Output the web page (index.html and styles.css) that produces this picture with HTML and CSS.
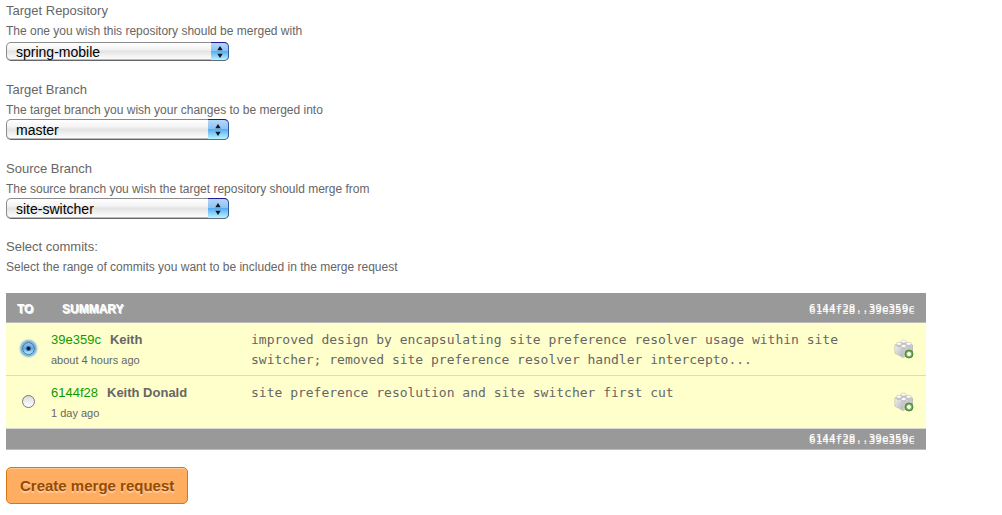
FILE: index.html
```html
<!DOCTYPE html>
<html lang="en">
<head>
<meta charset="utf-8">
<title>Create merge request</title>
<link rel="stylesheet" href="styles.css">
</head>
<body>
<svg class="defs" width="0" height="0" aria-hidden="true">
  <defs>
    <linearGradient id="side" x1="0" y1="0" x2="1" y2="1"><stop offset="0" stop-color="#f0f0f0"/><stop offset="1" stop-color="#b4b4b4"/></linearGradient>
    <radialGradient id="plus"><stop offset="0" stop-color="#ffffff"/><stop offset=".35" stop-color="#e4f3d8"/><stop offset=".6" stop-color="#83bd63"/><stop offset="1" stop-color="#4b8b31"/></radialGradient>
    <symbol id="brick" viewBox="0 0 20 20">
      <path d="M1 6 9.500 3l9 3v8L9 18.500 1 14z" fill="#e6e6e6" stroke="#b0b0b0" stroke-width=".8"/>
      <path d="M1.300 6.500 9 10V18L1.300 13.800z" fill="url(#side)"/>
      <path d="M9 10 18.200 6.500v7.400L9 18z" fill="#c8c8c8"/>
      <g fill="#c4c4c4">
        <path d="M7 2.500v2a2.600 1.500 0 0 0 5.200 0v-2z"/>
        <path d="M2.400 4.800v2a2.600 1.500 0 0 0 5.200 0v-2z"/>
        <path d="M12 4.800v2a2.600 1.500 0 0 0 5.200 0v-2z"/>
        <path d="M7 7v2a2.600 1.500 0 0 0 5.200 0V7z"/>
      </g>
      <g fill="#fff" stroke="#b0b0b0" stroke-width=".5">
        <ellipse cx="9.600" cy="2.500" rx="2.600" ry="1.500"/>
        <ellipse cx="5" cy="4.800" rx="2.600" ry="1.500"/>
        <ellipse cx="14.600" cy="4.800" rx="2.600" ry="1.500"/>
        <ellipse cx="9.600" cy="7" rx="2.600" ry="1.500"/>
      </g>
      <circle cx="15" cy="15" r="4" fill="url(#plus)" stroke="#4b8b31" stroke-width=".9"/>
      <path d="M15 13v4M13 15h4" stroke="#fff" stroke-width="1.600"/>
    </symbol>
    <symbol id="arrows" viewBox="0 0 10 14"><path d="M5 1 7.700 5.200H2.300zM5 13 2.300 8.800h5.400z" fill="#101820"/></symbol>
  </defs>
</svg>
<form class="merge-form">
  <div class="field">
    <label class="field-label" for="repo">Target Repository</label>
    <p class="hint">The one you wish this repository should be merged with</p>
    <div class="picker picker-small">
      <select id="repo"><option>spring-mobile</option></select>
      <span class="cap"><svg class="arrows"><use href="#arrows"/></svg></span>
    </div>
  </div>
  <div class="field">
    <label class="field-label" for="target">Target Branch</label>
    <p class="hint">The target branch you wish your changes to be merged into</p>
    <div class="picker">
      <select id="target"><option>master</option></select>
      <span class="cap"><svg class="arrows"><use href="#arrows"/></svg></span>
    </div>
  </div>
  <div class="field">
    <label class="field-label" for="source">Source Branch</label>
    <p class="hint">The source branch you wish the target repository should merge from</p>
    <div class="picker">
      <select id="source"><option>site-switcher</option></select>
      <span class="cap"><svg class="arrows"><use href="#arrows"/></svg></span>
    </div>
  </div>
  <div class="commits-intro">
    <div class="field-label" id="commits-label">Select commits:</div>
    <p class="hint">Select the range of commits you want to be included in the merge request</p>
  </div>
  <table class="commits" aria-labelledby="commits-label">
    <thead>
      <tr><th class="to">To</th><th class="summary" colspan="2">Summary</th><th class="range" colspan="2">6144f28..39e359c</th></tr>
    </thead>
    <tbody>
      <tr>
        <td class="to"><input type="radio" name="to" id="c1" aria-label="39e359c" checked></td>
        <td class="who"><a href="#c1">39e359c</a><label for="c1">Keith</label><div class="when">about 4 hours ago</div></td>
        <td class="message" colspan="2">improved design by encapsulating site preference resolver usage within site switcher; removed site preference resolver handler intercepto...</td>
        <td class="action"><svg class="brick"><use href="#brick"/></svg></td>
      </tr>
      <tr>
        <td class="to"><input type="radio" name="to" id="c2" aria-label="6144f28"></td>
        <td class="who"><a href="#c2">6144f28</a><label for="c2">Keith Donald</label><div class="when">1 day ago</div></td>
        <td class="message" colspan="2">site preference resolution and site switcher first cut</td>
        <td class="action"><svg class="brick"><use href="#brick"/></svg></td>
      </tr>
    </tbody>
    <tfoot>
      <tr><td class="range" colspan="5">6144f28..39e359c</td></tr>
    </tfoot>
  </table>
  <button class="submit" type="button">Create merge request</button>
</form>
</body>
</html>
```
FILE: styles.css
```css
* { box-sizing: border-box; }
body {
  margin: 0;
  background: #fff;
  color: #666;
  font: 13px/20px "Liberation Sans", Arial, sans-serif;
}
.defs { position: absolute; }
.merge-form { padding: 0 76px 0 6px; }
.field { margin-bottom: 18px; }
.field-label { display: block; padding-top: 1px; }
.hint { margin: 0; padding-top: 1px; font-size: 12px; line-height: 18px; }

.picker { position: relative; width: 223px; height: 21px; }
.picker select {
  appearance: none;
  display: block;
  width: 100%;
  height: 100%;
  padding: 1px 24px 0 9px;
  border: 1px solid #8c8c8c;
  border-bottom-color: #66666a;
  border-radius: 5px;
  background: linear-gradient(#fff, #f4f4f4 35%, #e4e4e4 50%, #f0f0f0 70%, #fff);
  box-shadow: inset 0 -1px 0 #bbb;
  color: #000;
  font: 14px "Liberation Sans", Arial, sans-serif;
}
.cap {
  position: absolute;
  top: 0;
  right: 0;
  bottom: 0;
  width: 21px;
  display: flex;
  align-items: center;
  justify-content: center;
  border: 1px solid #2f5a9e;
  border-top-color: #26189a;
  border-bottom-color: #5c6c78;
  border-left: 0;
  border-radius: 0 5px 5px 0;
  background: linear-gradient(#b5d8f8, #8cc4f4 45%, #5aaef0 50%, #8ad0fb 75%, #b8f4ff);
  pointer-events: none;
}
.arrows { width: 10px; height: 14px; }
.picker-small { height: 19px; margin: 2px 0 18px; }
.picker-small .cap { width: 18px; }
.commits-intro { margin-top: -1px; }

.commits {
  width: 100%;
  margin: 17px 0;
  border-collapse: collapse;
}
.commits th, .commits td { padding: 0; text-align: left; vertical-align: top; }
.commits tr { border-bottom: 1px solid #d8d8d8; }
.commits thead, .commits tfoot { background: #999; color: #fff; }
.commits thead tr, .commits tfoot tr { border-bottom-color: #bbb; }
.commits thead th {
  height: 29px;
  padding-top: 5px;
  font-size: 12px;
  line-height: 22px;
  text-transform: uppercase;
  text-shadow: 1px 1px 0 #eee;
}
.commits tbody { background: #ffc; }
.commits tbody td { height: 53px; padding-top: 7px; }
.commits .to { width: 45px; padding-left: 11px; }
.commits .summary { padding-left: 11px; }
.commits .who { width: 200px; }
.commits .range {
  padding-right: 11px;
  text-align: right;
  text-transform: none;
  font: 11px/22px "DejaVu Sans Mono", monospace;
  text-shadow: 0 2px 0 #eee;
}
.commits tfoot .range { line-height: 20px; }
.commits .message { padding-right: 48px; font: 13px/20px "DejaVu Sans Mono", monospace; }
.commits tbody .action { width: 32px; padding-top: 16px; }
.commits a { margin-right: 9px; color: #190; text-decoration: none; }
.who label { font-weight: bold; }
.when { font-size: 11px; line-height: 20px; }
.brick { display: block; width: 20px; height: 20px; }
.commits input {
  appearance: none;
  display: block;
  width: 13px;
  height: 13px;
  margin: 12px 0 0 5px;
  border: 1px solid #777;
  border-radius: 50%;
  background: linear-gradient(#ddd, #fff);
}
.commits input:checked {
  border-color: #3a6ea8;
  background: radial-gradient(circle at 50% 50%, #0a1420 0 1px, transparent 3px), linear-gradient(#8fc0f0, #5aa8ec 50%, #b8f0ff);
  box-shadow: 0 0 2px 2px #6caee0;
}

.submit {
  display: block;
  height: 37px;
  padding: 0 13px;
  border: 1px solid #d97613;
  border-radius: 5px;
  background: #ffae61;
  box-shadow: inset 0 1px 0 #ffc894;
  color: #954b00;
  font: bold 15px "Liberation Sans", Arial, sans-serif;
  text-shadow: 0 2px 1px #ffcfb0;
}
```
